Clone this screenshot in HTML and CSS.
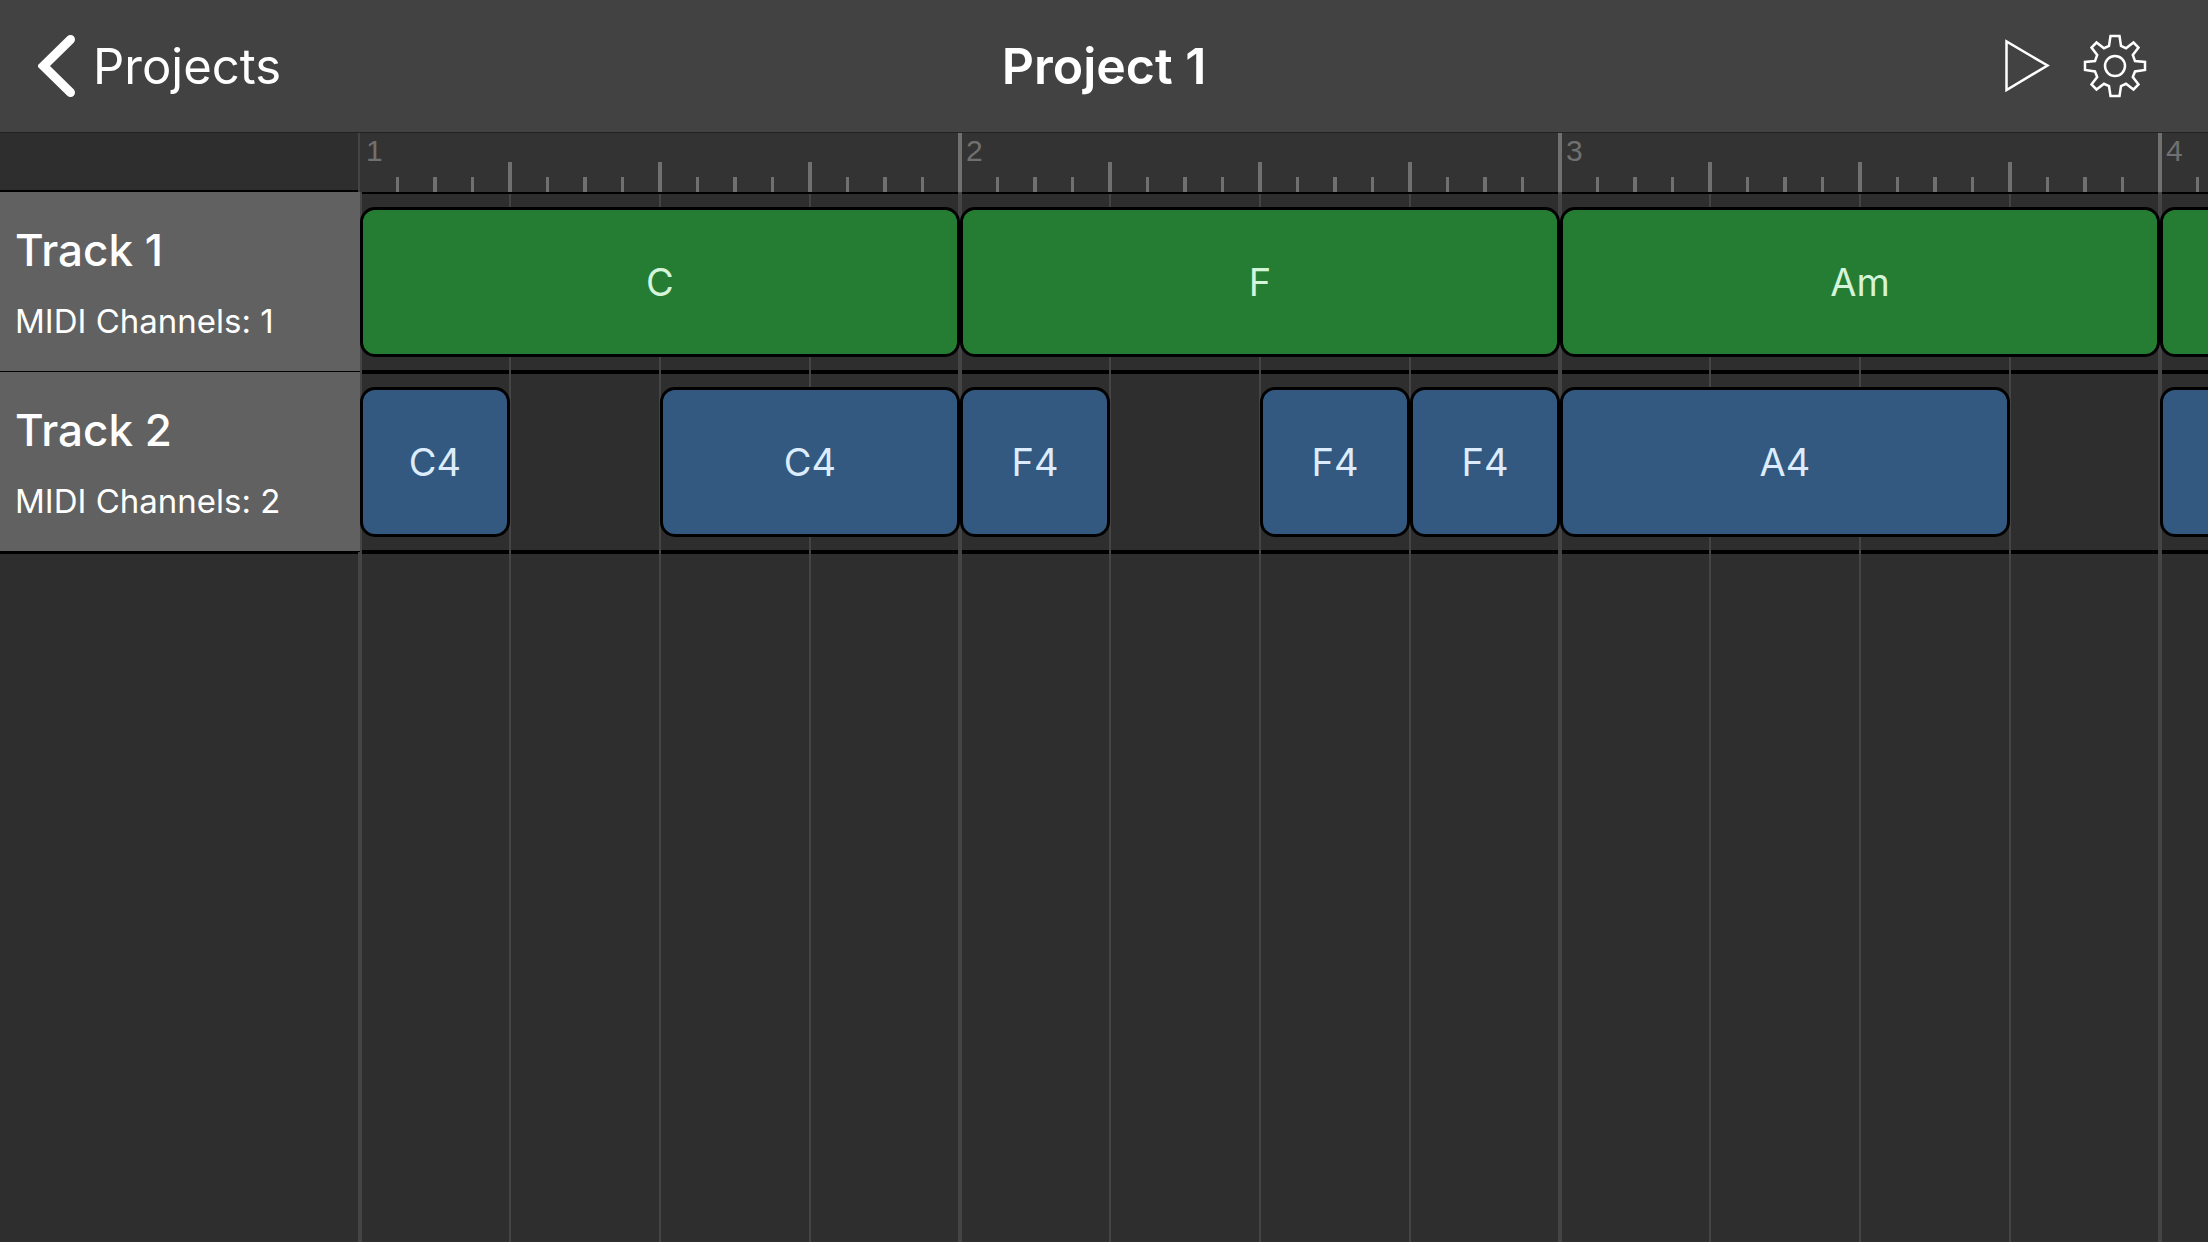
FILE: index.html
```html
<!DOCTYPE html>
<html lang="en">
<head>
    <meta charset="UTF-8">
    <meta name="viewport" content="width=device-width, initial-scale=1">
    <title>Project 1</title>
    <link rel="stylesheet" href="styles.css">
</head>
<body>
    <header class="navbar">
        <a class="back" href="#">
            <svg class="chevron" viewBox="0 0 38 64" aria-hidden="true">
                <path d="M32.5 5.5 L5.5 32 L32.5 58.5"/>
            </svg>
            <span>Projects</span>
        </a>
        <h1 class="title">Project 1</h1>
        <div class="actions">
            <button class="icon-btn" type="button" aria-label="Play">
                <svg class="icon-play" viewBox="0 0 46 54" aria-hidden="true">
                    <path d="M2.5 2.5 V51 L43.5 26.5 Z"/>
                </svg>
            </button>
            <button class="icon-btn" type="button" aria-label="Settings">
                <svg class="icon-gear" viewBox="-32 -32 64 64" aria-hidden="true">
                    <path d="M-4.5 -30 H4.5 L6 -20 L11 -17.8 L18.5 -23.5 L23.5 -18.5 L17.8 -11 L20 -5 L30 -4 V4 L20 5.5 L17.8 11 L23.5 18.5 L18.5 23.5 L11 17.8 L6 20 L4.5 30 H-4.5 L-6 20 L-11 17.8 L-18.5 23.5 L-23.5 18.5 L-17.8 11 L-20 5.5 L-30 4 V-4 L-20 -5 L-17.8 -11 L-23.5 -18.5 L-18.5 -23.5 L-11 -17.8 L-6 -20 Z"/>
                    <circle r="10"/>
                </svg>
            </button>
        </div>
    </header>

    <main class="editor">
        <!-- track headers -->
        <aside class="sidebar">
            <div class="corner"></div>
            <section class="track">
                <h2>Track 1</h2>
                <p>MIDI Channels: 1</p>
            </section>
            <section class="track">
                <h2>Track 2</h2>
                <p>MIDI Channels: 2</p>
            </section>
            <div class="sidebar-rest"></div>
        </aside>

        <!-- timeline -->
        <div class="timeline">
            <div class="ruler">
                <span>1</span>
                <span>2</span>
                <span>3</span>
                <span>4</span>
            </div>
            <div class="lanes">
                <div class="lane chords">
                    <button class="clip len-4" type="button">C</button>
                    <button class="clip len-4" type="button">F</button>
                    <button class="clip len-4" type="button">Am</button>
                    <button class="clip len-4" type="button" aria-label="Clip"></button>
                </div>
                <div class="lane notes">
                    <button class="clip len-1" type="button">C4</button>
                    <button class="clip len-2 after-rest" type="button">C4</button>
                    <button class="clip len-1" type="button">F4</button>
                    <button class="clip len-1 after-rest" type="button">F4</button>
                    <button class="clip len-1" type="button">F4</button>
                    <button class="clip len-3" type="button">A4</button>
                    <button class="clip len-3 after-rest" type="button" aria-label="Clip"></button>
                </div>
            </div>
        </div>
    </main>
</body>
</html>
```

FILE: styles.css
```css
:root {
    --beat: 150px;
    --bar: 600px;
    --line: #444444;
    --tick: #707070;
    --bg: #2e2e2e;
}

* {
    box-sizing: border-box;
}

body {
    margin: 0;
    height: 100vh;
    display: flex;
    flex-direction: column;
    background: var(--bg);
    color: #fff;
    font-family: Inter, "Liberation Sans", sans-serif;
    overflow: hidden;
}

h1, h2, p {
    margin: 0;
}

button {
    margin: 0;
    padding: 0;
    border: none;
    background: none;
    color: inherit;
    font: inherit;
    cursor: pointer;
}

/* top bar */
.navbar {
    flex: none;
    display: grid;
    grid-template-columns: 1fr auto 1fr;
    align-items: center;
    height: 133px;
    padding: 0 38px;
    background: #424242;
    border-bottom: 1px solid #222;
}

.back {
    display: flex;
    align-items: center;
    gap: 17px;
    color: #fff;
    font-size: 49px;
    text-decoration: none;
}

.chevron {
    width: 38px;
    height: 64px;
    fill: none;
    stroke: #fff;
    stroke-width: 9;
    stroke-linecap: round;
    stroke-linejoin: miter;
}

.title {
    font-size: 50px;
    font-weight: 600;
}

.actions {
    display: flex;
    justify-content: flex-end;
    align-items: center;
    gap: 33px;
    padding-right: 23px;
}

.icon-btn {
    display: flex;
}

.icon-btn svg {
    fill: none;
    stroke: #fff;
    stroke-width: 2.5;
}

.icon-play {
    width: 46px;
    height: 54px;
}

.icon-gear {
    width: 64px;
    height: 64px;
}

.editor {
    flex: 1;
    display: flex;
    min-height: 0;
}

/* track headers */
.sidebar {
    flex: none;
    display: flex;
    flex-direction: column;
    width: 360px;
}

.corner {
    height: 59px;
    background: linear-gradient(#000, #000) left bottom / 358px 2px no-repeat, var(--bg);
    border-right: 2px solid var(--line);
}

.track {
    display: flex;
    flex-direction: column;
    gap: 23px;
    height: 180px;
    padding: 30px 15px;
    background: #616161;
    border-bottom: 1px solid #000;
}

.track h2 {
    font-size: 44px;
    font-weight: 500;
    line-height: 56px;
}

.track p {
    font-size: 33px;
    line-height: 40px;
}

.sidebar-rest {
    flex: 1;
    background: linear-gradient(#000, #000) left top / 358px 2px no-repeat;
    border-right: 2px solid var(--line);
}

/* timeline */
.timeline {
    flex: 1;
    display: flex;
    flex-direction: column;
    min-width: 0;
    overflow: hidden;
}

.ruler {
    flex: none;
    display: grid;
    grid-auto-flow: column;
    grid-auto-columns: var(--bar);
    height: 61px;
    border-bottom: 2px solid #000;
    background:
        linear-gradient(var(--tick), var(--tick)) 598px 0 / 4px 59px no-repeat,
        linear-gradient(var(--tick), var(--tick)) 1198px 0 / 4px 59px no-repeat,
        linear-gradient(var(--tick), var(--tick)) 1798px 0 / 4px 59px no-repeat,
        linear-gradient(90deg, var(--tick) 4px, transparent 4px) 148px 29px / 150px 30px repeat-x,
        linear-gradient(90deg, var(--tick) 3px, transparent 3px) 36px 44px / 150px 15px repeat-x,
        linear-gradient(90deg, var(--tick) 4px, transparent 4px) 73px 44px / 150px 15px repeat-x,
        linear-gradient(90deg, var(--tick) 3px, transparent 3px) 111px 44px / 150px 15px repeat-x,
        #333;
}

.ruler span {
    padding: 0 6px;
    color: var(--tick);
    font-family: "Liberation Sans", Arial, sans-serif;
    font-size: 30px;
    line-height: 36px;
}

/* nothing is ticked where the song starts */
.ruler span:first-child {
    background: linear-gradient(#333, #333) 0 0 / 3px 100% no-repeat;
}

.lanes {
    position: relative;
    flex: 1;
}

/* bar lines and beat lines lie over the lane borders */
.lanes::before,
.lanes::after {
    content: '';
    position: absolute;
    inset: 0;
    pointer-events: none;
}

.lanes::before {
    top: -2px;
    background: repeating-linear-gradient(90deg, var(--line) 0 2px, transparent 2px 598px, var(--line) 598px 600px);
}

.lanes::after {
    background: repeating-linear-gradient(90deg, var(--line) 0 1px, transparent 1px 149px, var(--line) 149px 150px);
}

.lane {
    display: grid;
    grid-template-columns: repeat(16, var(--beat));
    height: 180px;
    padding: 13px 0;
    border-bottom: 4px solid #000;
}

.clip {
    position: relative;
    z-index: 1;
    border: 3px solid #000;
    border-radius: 15px;
    font-size: 38px;
}

.chords .clip {
    background: #257d33;
    color: #d5f5da;
}

.notes .clip {
    background: #335980;
    color: #dcecfc;
}

.len-1 { grid-column-end: span 1; }
.len-2 { grid-column-end: span 2; }
.len-3 { grid-column-end: span 3; }
.len-4 { grid-column-end: span 4; }

/* one beat of silence before the clip */
.after-rest {
    margin-left: var(--beat);
}

.len-1.after-rest { grid-column-end: span 2; }
.len-2.after-rest { grid-column-end: span 3; }
.len-3.after-rest { grid-column-end: span 4; }
```
